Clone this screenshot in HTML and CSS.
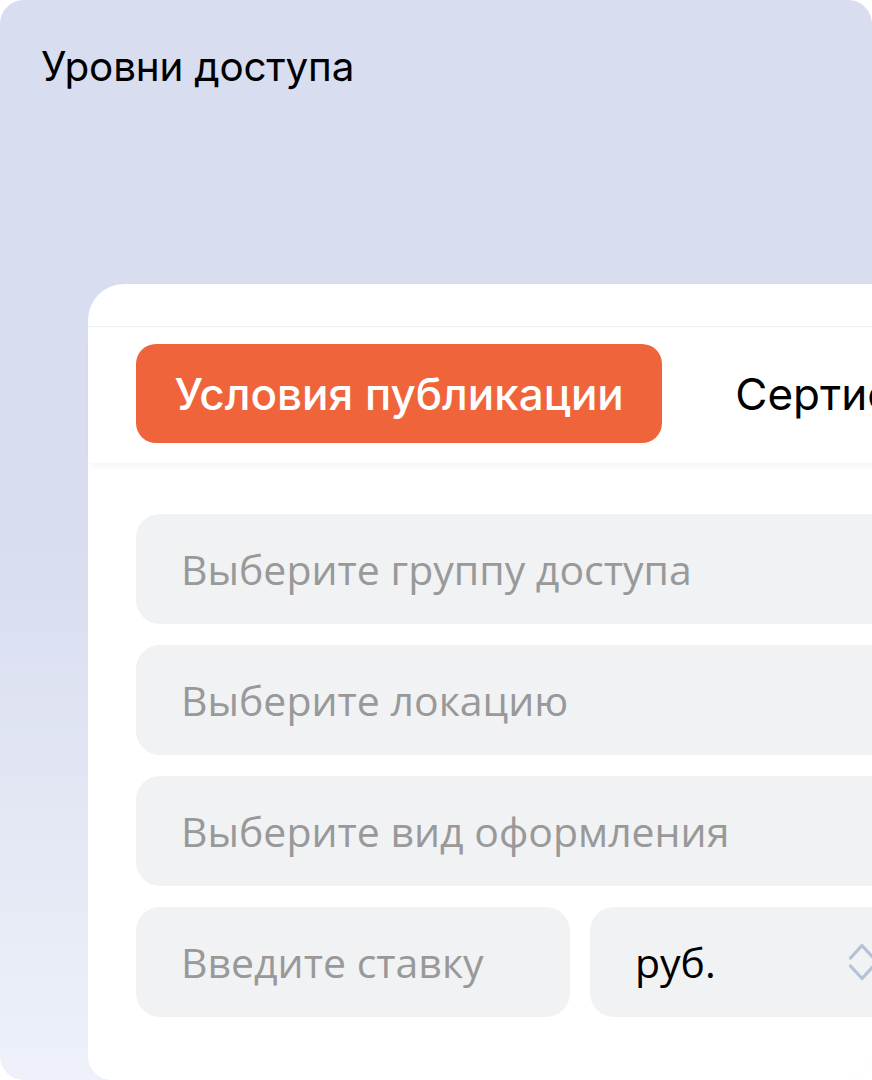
FILE: index.html
```html
<!DOCTYPE html>
<html lang="ru">
<head>
    <meta charset="UTF-8">
    <title>Уровни доступа</title>
    <link rel="stylesheet" href="styles.css">
</head>
<body>
    <div class="frame">
        <h1 class="frame-title">Уровни доступа</h1>

        <div class="card">
            <div class="tabs">
                <button class="tab active">Условия публикации</button>
                <button class="tab">Сертификаты</button>
            </div>

            <div class="fields">
                <div class="field">Выберите группу доступа</div>
                <div class="field">Выберите локацию</div>
                <div class="field">Выберите вид оформления</div>
                <div class="field-row">
                    <div class="field field-rate">Введите ставку</div>
                    <div class="field field-select">
                        <span class="value">руб.</span>
                        <svg class="chevrons" width="26" height="40" viewBox="0 0 26 40" fill="none" stroke="#b4c2d8" stroke-width="3.2" stroke-linecap="round" stroke-linejoin="round">
                            <path d="M1.5 16 L13 3.5 L24.5 16"/>
                            <path d="M1.5 24 L13 36.5 L24.5 24"/>
                        </svg>
                    </div>
                </div>
            </div>
        </div>
    </div>
</body>
</html>
```

FILE: styles.css
```css
body {
    margin: 0;
    font-family: Inter, "Noto Sans", sans-serif;
    color: #000;
    background: #fff;
}
.frame {
    width: 872px;
    height: 1080px;
    border-radius: 24px;
    overflow: hidden;
    background: linear-gradient(180deg, #d8ddef 0%, #d8ddef 50%, #eef1f9 100%);
    box-sizing: border-box;
    padding-top: 43px;
}
.frame-title {
    margin: 0 0 0 41px;
    font-size: 40.4px;
    font-weight: 400;
    line-height: 48px;
    letter-spacing: -0.2px;
}
.card {
    margin: 193px 0 0 88px;
    width: 888px;
    height: 796px;
    background: #fff;
    border-radius: 36px 0 0 24px;
    padding-top: 42px;
    box-sizing: border-box;
}
.tabs {
    display: flex;
    align-items: center;
    gap: 73px;
    border-top: 1px solid #eeeff2;
    padding: 17px 48px 20px;
    box-shadow: 0 6px 8px -4px rgba(0, 0, 0, 0.06);
    overflow: hidden;
}
.tab {
    font-family: Inter, "Noto Sans", sans-serif;
    font-size: 44px;
    font-weight: 400;
    height: 99px;
    border: none;
    background: none;
    color: #000;
    padding: 0;
    white-space: nowrap;
    flex-shrink: 0;
}
.tab.active {
    background: #f0643c;
    color: #fff;
    font-weight: 500;
    border-radius: 20px;
    padding: 0 38.5px;
}
.fields {
    display: flex;
    flex-direction: column;
    gap: 21px;
    padding: 51px 48px 0;
}
.field {
    height: 110px;
    background: #f1f2f4;
    border-radius: 24px;
    display: flex;
    align-items: center;
    padding-left: 45px;
    font-family: "Open Sans", "Noto Sans", sans-serif;
    font-size: 41px;
    color: #999;
}
.field-row {
    display: flex;
    gap: 20px;
}
.field-rate {
    width: 434px;
    box-sizing: border-box;
}
.field-select {
    flex: 1;
    color: #000;
    justify-content: space-between;
    padding-right: 53px;
}
```
